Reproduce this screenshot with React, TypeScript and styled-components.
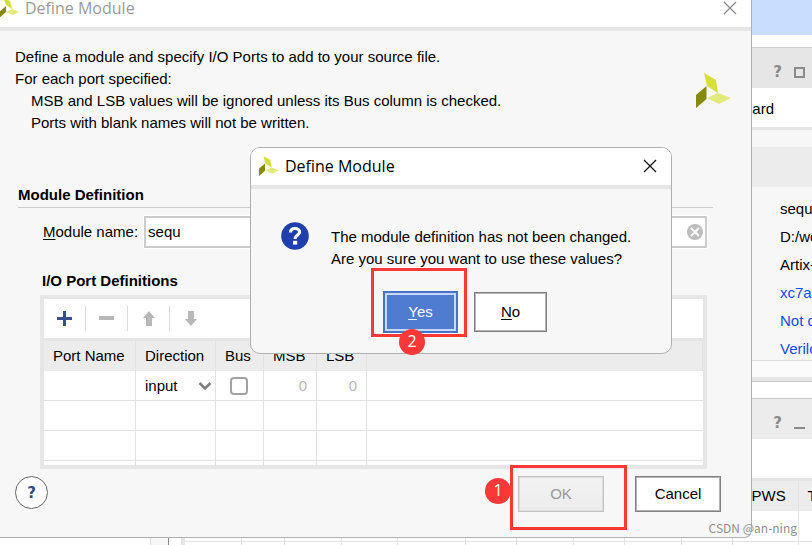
import React from "react";
import styled, { createGlobalStyle, css } from "styled-components";

const GlobalStyle = createGlobalStyle`
  *, *::before, *::after { box-sizing: border-box; }
  body {
    margin: 0;
    background: #fff;
    color: #000;
    font-family: "Liberation Sans", Arial, sans-serif;
    font-size: 15px;
    line-height: 22px;
  }
  button, input, select { font: inherit; color: inherit; margin: 0; }
  p, h1, h2 { margin: 0; }
`;

const Stage = styled.div`
  position: relative;
  display: grid;
  height: 100vh;
  overflow: hidden;
  align-items: start;
`;

/* ---------- workspace behind the dialogs ---------- */

const Workspace = styled.div`
  grid-area: 1 / 1;
  min-width: 0;
  display: flex;
  flex-direction: column;
`;

const TopBand = styled.div`
  height: 35px;
  margin-bottom: 12px;
  background: #c9ddfe;
`;

const PaneHeader = styled.div<{ $height: number; $bg: string }>`
  height: ${(p) => p.$height}px;
  background: ${(p) => p.$bg};
  border-top: 1px solid #ccc;
  display: flex;
  align-items: center;
  justify-content: flex-end;
  gap: 9px;
  padding: 8px 6px 0 0;
  color: #8a8a8a;
`;

const PaneTool = styled.button`
  border: 0;
  padding: 0;
  background: none;
  display: flex;
  width: 13px;
  height: 22px;
  align-items: center;
  justify-content: center;
  font-family: "DejaVu Sans", sans-serif;
  font-weight: bold;
  font-size: 15px;
`;

const TabStrip = styled.div`
  height: 42px;
  padding-top: 10px;
  background: #fff;
  border-bottom: 3px solid #e6e6e6;
  display: flex;
  justify-content: flex-end;
`;

const TabLabel = styled.span`
  width: 68px;
`;

const Summary = styled.div`
  background: #f7f7f7;
  padding-top: 17px;
  height: 231px;
  border-bottom: 1px solid #ddd;
`;

const SummaryHead = styled.div`
  height: 40px;
  margin-bottom: 8px;
  background: #ececec;
`;

const SummaryList = styled.div`
  display: flex;
  flex-direction: column;
  width: 32px;
  margin-left: auto;
  line-height: 28px;
  white-space: nowrap;
`;

const SummaryLink = styled.a`
  color: #0f4cf5;
  text-decoration: none;
`;

const Splitter = styled.div`
  height: 37px;
  background: #fff;
  border-top: 16px solid #fbfbfb;
  display: flex;
  &::before {
    content: "";
    flex: 1;
    height: 5px;
    background: #e6e6e6;
    border-bottom: 1px solid #c8c8c8;
  }
`;

const LowerRow = styled.div`
  display: grid;
  grid-template-columns: 150px 19px minmax(0, 1fr);
`;

const TreePane = styled.div`
  background: #fff;
`;

const ScrollTrack = styled.div`
  background: #f7f7f7;
  border-left: 1px solid #ddd;
  border-right: 1px solid #888;
`;

const RunsPane = styled.div`
  margin-left: 12px;
  border-left: 4px solid #e6e6e6;
  overflow: hidden;
`;

const RunsToolbar = styled.div`
  height: 42px;
  border-bottom: 3px solid #e6e6e6;
`;

const RunsTable = styled.table`
  width: 690px;
  table-layout: fixed;
  border-collapse: collapse;
  th, td {
    height: 30px;
    padding: 0;
    border-right: 1px solid #e2e2e2;
    border-bottom: 1px solid #e2e2e2;
    font-weight: normal;
    text-align: left;
  }
  th { background: #ececec; border-bottom: 0; padding-left: 9px; }
  th.score { padding-left: 19px; }
`;

/* ---------- shared dialog parts ---------- */

const TitleBar = styled.header<{ $height: number; $muted?: boolean }>`
  height: ${(p) => p.$height}px;
  background: #fff;
  border-bottom: 4px solid #e6e6e6;
  display: flex;
  align-items: center;
  gap: 6px;
  color: ${(p) => (p.$muted ? "#9a9a9a" : "#000")};
`;

const Title = styled.h1`
  flex: 1;
  font-family: "Open Sans", "Noto Sans", sans-serif;
  font-size: 16px;
  font-weight: normal;
  line-height: 22px;
`;

const CloseButton = styled.button`
  border: 0;
  padding: 0;
  background: none;
  display: flex;
`;

const Mnemonic = styled.span`
  text-decoration: underline;
  text-underline-offset: 2px;
`;

const PushButton = styled.button<{ $kind?: "primary" | "disabled"; $size: "wide" | "compact" }>`
  display: block;
  padding: 0;
  width: ${(p) => (p.$size === "wide" ? 86 : 73)}px;
  height: ${(p) => (p.$size === "wide" ? 36 : 40)}px;
  background: #fff;
  color: #000;
  border: 1px solid #808080;
  box-shadow: inset 0 0 0 1px #b4b4b4;
  ${(p) =>
    p.$kind === "primary" &&
    css`
      width: 75px;
      height: 42px;
      background: #4f7bd0;
      color: #fff;
      border: 2px solid #4773cc;
      box-shadow: inset 0 0 0 2px #c9d8f6;
    `}
  ${(p) =>
    p.$kind === "disabled" &&
    css`
      background: linear-gradient(#f2f2f2, #ececec);
      color: #999;
      border-color: #c4c4c4;
      box-shadow: inset 0 0 0 1px #dcdcdc;
    `}
`;

/* ---------- main dialog ---------- */

const MainDialog = styled.section`
  grid-area: 1 / 1;
  position: relative;
  margin-right: 60px;
  background: #f7f7f7;
  border-right: 1px solid #b0b0b0;
  border-bottom: 1px solid #b0b0b0;
  border-bottom-right-radius: 8px;
  overflow: hidden;
`;

const MainTitleBar = styled(TitleBar)`
  padding: 0 14px 11px 0;
`;

const Intro = styled.div`
  display: flex;
  justify-content: space-between;
  padding: 15px 20px 0 15px;
`;

const Indented = styled.p`
  padding-left: 16px;
`;

const IntroLogo = styled.div`
  padding-top: 27px;
`;

const GroupTitle = styled.h2`
  margin: 50px 38px 0 18px;
  padding-bottom: 1px;
  border-bottom: 1px solid #ccc;
  font-size: 15px;
  line-height: 22px;
`;

const SubTitle = styled.h2`
  margin: 22px 0 3px 42px;
  font-size: 15px;
  line-height: 22px;
`;

const NameRow = styled.div`
  display: flex;
  align-items: center;
  gap: 6px;
  margin: 8px 44px 0 43px;
`;

const NameBox = styled.div`
  flex: 1;
  display: flex;
  align-items: center;
  height: 32px;
  padding: 0 2px;
  background: #fff;
  border: 2px solid #ccc;
  box-shadow: 0 0 0 1px #fff;
`;

const NameInput = styled.input`
  flex: 1;
  min-width: 0;
  border: 0;
  padding: 0;
  outline: 0;
  background: none;
`;

const PortsFrame = styled.div`
  margin: 0 44px 0 40px;
  height: 174px;
  overflow: hidden;
  border: 4px solid #e6e6e6;
  background: #fff;
`;

const PortsToolbar = styled.div`
  display: flex;
  align-items: center;
  height: 42px;
  border-bottom: 3px solid #e6e6e6;
`;

const ToolButton = styled.button`
  width: 42px;
  height: 25px;
  padding: 0;
  border: 0;
  border-right: 1px solid #ddd;
  background: none;
  display: flex;
  align-items: center;
  justify-content: center;
  &:last-child { border-right: 0; }
`;

const PortsTable = styled.table`
  width: 100%;
  table-layout: fixed;
  border-collapse: separate;
  border-spacing: 0;
  th, td {
    height: 30px;
    padding: 0 9px;
    border-right: 1px solid #e2e2e2;
    border-bottom: 1px solid #e2e2e2;
    font-weight: normal;
    text-align: left;
    white-space: nowrap;
  }
  th { background: #ececec; border-bottom: 0; }
  td:last-child { border-right: 0; }
`;

const Col = styled.col<{ $w?: number }>`
  width: ${(p) => (p.$w ? `${p.$w}px` : "auto")};
`;

const NumberCell = styled.td`
  && { text-align: right; color: #b8b8b8; }
`;

const SelectCell = styled.div`
  display: flex;
  align-items: center;
  margin-right: -6px;
`;

const DirectionSelect = styled.select`
  appearance: none;
  flex: 1;
  min-width: 0;
  border: 0;
  padding: 0;
  background: none;
`;

const Tick = styled.input`
  appearance: none;
  display: block;
  width: 18px;
  height: 18px;
  && { margin: 0 0 0 5px; }
  border: 2px solid #a2a2a2;
  border-radius: 4px;
  background: #fff;
`;

const MainFooter = styled.footer`
  display: flex;
  align-items: flex-start;
  padding: 7px 30px 25px 15px;
`;

const HelpButton = styled.button`
  width: 33px;
  height: 33px;
  margin-right: auto;
  padding: 0;
  border: 1px solid #666;
  border-radius: 50%;
  background: #fff;
  display: flex;
  align-items: center;
  justify-content: center;
  color: #2f4b87;
  font-family: "DejaVu Sans", sans-serif;
  font-size: 15px;
  font-weight: bold;
`;

const FooterAction = styled.div`
  position: relative;
  margin-left: 31px;
`;

/* ---------- confirmation ---------- */

const Confirm = styled.section`
  position: absolute;
  left: 250px;
  top: 147px;
  width: 422px;
  background: #f7f7f7;
  border: 1px solid #b0b0b0;
  border-radius: 10px;
`;

const ConfirmTitleBar = styled(TitleBar)`
  padding: 0 14px 2px 8px;
  border-radius: 9px 9px 0 0;
`;

const ConfirmBody = styled.div`
  display: flex;
  align-items: flex-start;
  gap: 22px;
  padding: 33px 30px 0;
`;

const ConfirmText = styled.div`
  padding-top: 4px;
`;

const ConfirmActions = styled.div`
  display: flex;
  align-items: center;
  gap: 16px;
  padding: 21px 0 20px 132px;
`;

const Action = styled.div`
  position: relative;
`;

/* ---------- annotations drawn over the dialogs ---------- */

const Mark = styled.div<{ $left: number; $top: number; $w: number; $h: number }>`
  position: absolute;
  left: ${(p) => p.$left}px;
  top: ${(p) => p.$top}px;
  width: ${(p) => p.$w}px;
  height: ${(p) => p.$h}px;
  border: 3px solid #fb3838;
  pointer-events: none;
`;

const StepBadge = styled.span<{ $left: number; $top: number }>`
  position: absolute;
  left: ${(p) => p.$left}px;
  top: ${(p) => p.$top}px;
  width: 26px;
  height: 26px;
  border-radius: 50%;
  background: #fb3838;
  color: #fff;
  text-align: center;
  line-height: 24px;
  font-family: "Open Sans", sans-serif;
  font-size: 16px;
`;

const Watermark = styled.span`
  position: absolute;
  right: 15px;
  bottom: 7px;
  color: #8f8f8f;
  font-family: "Noto Sans CJK SC", sans-serif;
  font-size: 12px;
  line-height: 20px;
`;

/* ---------- drawings ---------- */

const Logo = ({ size }: { size: number }) => (
  <svg width={size} height={size} viewBox="0 0 35 35" aria-hidden="true">
    <path d="M8 0 20 7 22 20 11 13Z" fill="#d7df3a" />
    <path d="M0 22 10.500 13V26L0 35Z" fill="#86890b" />
    <path d="M11 25 22 20 35 25 23 31Z" fill="#e3ea7c" />
  </svg>
);

const Cross = ({ color }: { color: string }) => (
  <svg width="14" height="14" viewBox="0 0 14 14" aria-hidden="true">
    <path d="M1 1 13 13M13 1 1 13" stroke={color} strokeWidth="1.300" fill="none" />
  </svg>
);

const runColumns = [56, 43, 57, 56, 68, 51, 57, 51, 57, 51, 66];

export default function App() {
  return (
    <>
      <GlobalStyle />
      <Stage>
        <Workspace>
          <TopBand />
          <PaneHeader $height={41} $bg="#e6e6e6">
            <PaneTool aria-label="Help">?</PaneTool>
            <PaneTool aria-label="Maximize">
              <svg width="11" height="11" viewBox="0 0 11 11">
                <rect x="1" y="1" width="9" height="9" fill="none" stroke="#8a8a8a" strokeWidth="2" />
              </svg>
            </PaneTool>
          </PaneHeader>
          <TabStrip>
            <TabLabel>oard</TabLabel>
          </TabStrip>
          <Summary>
            <SummaryHead />
            <SummaryList>
              <span>sequ</span>
              <span>D:/wo</span>
              <span>Artix-7</span>
              <SummaryLink href="#part">xc7a</SummaryLink>
              <SummaryLink href="#top">Not d</SummaryLink>
              <SummaryLink href="#language">Verilo</SummaryLink>
            </SummaryList>
          </Summary>
          <Splitter />
          <PaneHeader $height={41} $bg="#ececec">
            <PaneTool aria-label="Help">?</PaneTool>
            <PaneTool aria-label="Minimize">
              <svg width="11" height="11" viewBox="0 0 11 11">
                <path d="M0 10H11" stroke="#8a8a8a" strokeWidth="2" />
              </svg>
            </PaneTool>
          </PaneHeader>
          <LowerRow>
            <TreePane />
            <ScrollTrack />
            <RunsPane>
              <RunsToolbar />
              <RunsTable>
                <colgroup>
                  {runColumns.map((w, i) => (
                    <Col key={i} $w={w} />
                  ))}
                  <Col />
                </colgroup>
                <thead>
                  <tr>
                    {runColumns.slice(1).map((_, i) => (
                      <th key={i} />
                    ))}
                    <th className="score">PWS</th>
                    <th>T</th>
                  </tr>
                </thead>
                <tbody>
                  <tr>
                    {runColumns.map((_, i) => (
                      <td key={i} />
                    ))}
                    <td />
                  </tr>
                  <tr>
                    {runColumns.map((_, i) => (
                      <td key={i} />
                    ))}
                    <td />
                  </tr>
                </tbody>
              </RunsTable>
            </RunsPane>
          </LowerRow>
        </Workspace>

        <MainDialog aria-label="Define Module">
          <MainTitleBar $height={31} $muted>
            <svg width="19" height="20" viewBox="0 -2 19 20" aria-hidden="true">
              <path d="M3 -3 10 1 12 9 6 5Z" fill="#d7df3a" />
              <path d="M-1 12 6 6V12L-1 18Z" fill="#86890b" />
              <path d="M6 12 12 9 19 12 13 15Z" fill="#e3ea7c" />
            </svg>
            <Title>Define Module</Title>
            <CloseButton aria-label="Close">
              <Cross color="#8a8a8a" />
            </CloseButton>
          </MainTitleBar>
          <Intro>
            <div>
              <p>Define a module and specify I/O Ports to add to your source file.</p>
              <p>For each port specified:</p>
              <Indented>MSB and LSB values will be ignored unless its Bus column is checked.</Indented>
              <Indented>Ports with blank names will not be written.</Indented>
            </div>
            <IntroLogo>
              <Logo size={35} />
            </IntroLogo>
          </Intro>
          <GroupTitle>Module Definition</GroupTitle>
          <NameRow>
            <label htmlFor="module-name">
              <Mnemonic>M</Mnemonic>odule name:
            </label>
            <NameBox>
              <NameInput id="module-name" defaultValue="sequ" />
              <CloseButton aria-label="Clear">
                <svg width="16" height="16" viewBox="0 0 16 16">
                  <circle cx="8" cy="8" r="8" fill="#bdbdbd" />
                  <path d="M4 4 12 12M12 4 4 12" stroke="#fff" strokeWidth="2" />
                </svg>
              </CloseButton>
            </NameBox>
          </NameRow>
          <SubTitle>I/O Port Definitions</SubTitle>
          <PortsFrame>
            <PortsToolbar>
              <ToolButton aria-label="Add port">
                <svg width="15" height="15" viewBox="0 0 15 15">
                  <path d="M7.500 0V15M0 7.500H15" stroke="#354f8c" strokeWidth="3" />
                </svg>
              </ToolButton>
              <ToolButton aria-label="Remove port">
                <svg width="15" height="15" viewBox="0 0 15 15">
                  <path d="M0 7H15" stroke="#b8b8b8" strokeWidth="4" />
                </svg>
              </ToolButton>
              <ToolButton aria-label="Move up">
                <svg width="12" height="15" viewBox="0 0 12 15">
                  <path d="M6 0 12 7H9V15H3V7H0Z" fill="#b8b8b8" />
                </svg>
              </ToolButton>
              <ToolButton aria-label="Move down">
                <svg width="12" height="15" viewBox="0 0 12 15">
                  <path d="M6 15 12 8H9V0H3V8H0Z" fill="#b8b8b8" />
                </svg>
              </ToolButton>
            </PortsToolbar>
            <PortsTable>
              <colgroup>
                <Col $w={92} />
                <Col $w={80} />
                <Col $w={48} />
                <Col $w={53} />
                <Col $w={50} />
                <Col />
              </colgroup>
              <thead>
                <tr>
                  <th>Port Name</th>
                  <th>Direction</th>
                  <th>Bus</th>
                  <th>MSB</th>
                  <th>LSB</th>
                  <th />
                </tr>
              </thead>
              <tbody>
                <tr>
                  <td />
                  <td>
                    <SelectCell>
                      <DirectionSelect aria-label="Direction" defaultValue="input">
                        <option>input</option>
                      </DirectionSelect>
                      <svg width="14" height="10" viewBox="0 0 14 10" aria-hidden="true">
                        <path d="M1.500 2 7 7.500 12.500 2" fill="none" stroke="#808080" strokeWidth="2.600" />
                      </svg>
                    </SelectCell>
                  </td>
                  <td>
                    <Tick type="checkbox" aria-label="Bus" />
                  </td>
                  <NumberCell>0</NumberCell>
                  <NumberCell>0</NumberCell>
                  <td />
                </tr>
                {[0, 1, 2].map((row) => (
                  <tr key={row}>
                    {[0, 1, 2, 3, 4, 5].map((cell) => (
                      <td key={cell} />
                    ))}
                  </tr>
                ))}
              </tbody>
            </PortsTable>
          </PortsFrame>
          <MainFooter>
            <HelpButton aria-label="Help">?</HelpButton>
            <FooterAction>
              <PushButton $size="wide" $kind="disabled" disabled>
                OK
              </PushButton>
              <Mark $left={-8} $top={-11} $w={117} $h={65} />
              <StepBadge $left={-33} $top={2}>1</StepBadge>
            </FooterAction>
            <FooterAction>
              <PushButton $size="wide">Cancel</PushButton>
            </FooterAction>
          </MainFooter>
        </MainDialog>

        <Confirm role="dialog" aria-label="Confirm module definition">
          <ConfirmTitleBar $height={41}>
            <Logo size={20} />
            <Title>Define Module</Title>
            <CloseButton aria-label="Close">
              <Cross color="#111" />
            </CloseButton>
          </ConfirmTitleBar>
          <ConfirmBody>
            <svg width="28" height="28" viewBox="0 0 28 28" aria-hidden="true">
              <circle cx="14" cy="14" r="13.800" fill="#1f3fae" />
              <path
                d="M9.500 10.500C9.500 7.700 11.400 6.500 14 6.500S18.600 7.900 18.600 10.200C18.600 13 14 13 14 17"
                fill="none"
                stroke="#fff"
                strokeWidth="3.200"
              />
              <rect x="12" y="18.800" width="4.200" height="3.800" fill="#fff" />
            </svg>
            <ConfirmText>
              <p>The module definition has not been changed.</p>
              <p>Are you sure you want to use these values?</p>
            </ConfirmText>
          </ConfirmBody>
          <ConfirmActions>
            <Action>
              <PushButton $size="compact" $kind="primary">
                <Mnemonic>Y</Mnemonic>es
              </PushButton>
              <Mark $left={-12} $top={-23} $w={96} $h={69} />
              <StepBadge $left={16} $top={38}>2</StepBadge>
            </Action>
            <Action>
              <PushButton $size="compact">
                <Mnemonic>N</Mnemonic>o
              </PushButton>
            </Action>
          </ConfirmActions>
        </Confirm>
        <Watermark>CSDN @an-ning</Watermark>
      </Stage>
    </>
  );
}
